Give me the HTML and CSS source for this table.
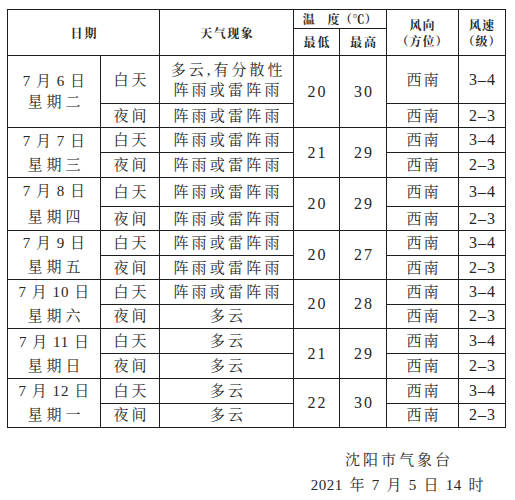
FILE: index.html
```html
<!DOCTYPE html>
<html lang="zh-CN">
<head>
<meta charset="utf-8">
<title>沈阳天气预报</title>
<link rel="stylesheet" href="styles.css">
</head>
<body>
<div class="sheet">
<table class="forecast">
<colgroup>
<col class="c-date"><col class="c-tod"><col class="c-wx"><col class="c-lo"><col class="c-hi"><col class="c-dir"><col class="c-spd">
</colgroup>
<thead>
<tr class="h1">
<th colspan="2" rowspan="2"><span class="hd-date">日期</span></th>
<th rowspan="2"><span class="hd-wx">天气现象</span></th>
<th colspan="2"><span class="hd-temp">温　度（℃）</span></th>
<th rowspan="2" class="hd-two"><div>风向</div><div>（方位）</div></th>
<th rowspan="2" class="hd-two"><div>风速</div><div>（级）</div></th>
</tr>
<tr class="h2">
<th><span class="hd-sub">最低</span></th>
<th><span class="hd-sub">最高</span></th>
</tr>
</thead>
<tbody>
<tr class="r48">
<td rowspan="2" class="date b1"><div class="d1">7 月 6 日</div><div class="d2">星期二</div></td>
<td class="tod">白天</td>
<td class="wx"><div class="wx2">多云,有分散性</div><div>阵雨或雷阵雨</div></td>
<td rowspan="2" class="num">20</td><td rowspan="2" class="num">30</td>
<td class="dir">西南</td><td class="spd">3–4</td>
</tr>
<tr class="r24">
<td class="tod">夜间</td><td class="wx">阵雨或雷阵雨</td><td class="dir">西南</td><td class="spd">2–3</td>
</tr>

<tr class="r25">
<td rowspan="2" class="date"><div class="d1">7 月 7 日</div><div class="d2">星期三</div></td>
<td class="tod">白天</td><td class="wx">阵雨或雷阵雨</td>
<td rowspan="2" class="num">21</td><td rowspan="2" class="num">29</td>
<td class="dir">西南</td><td class="spd">3–4</td>
</tr>
<tr class="r25">
<td class="tod">夜间</td><td class="wx">阵雨或雷阵雨</td><td class="dir">西南</td><td class="spd">2–3</td>
</tr>

<tr class="r29">
<td rowspan="2" class="date b3"><div class="d1">7 月 8 日</div><div class="d2">星期四</div></td>
<td class="tod">白天</td><td class="wx">阵雨或雷阵雨</td>
<td rowspan="2" class="num">20</td><td rowspan="2" class="num">29</td>
<td class="dir">西南</td><td class="spd">3–4</td>
</tr>
<tr class="r24">
<td class="tod">夜间</td><td class="wx">阵雨或雷阵雨</td><td class="dir">西南</td><td class="spd">2–3</td>
</tr>

<tr class="r25">
<td rowspan="2" class="date"><div class="d1">7 月 9 日</div><div class="d2">星期五</div></td>
<td class="tod">白天</td><td class="wx">阵雨或雷阵雨</td>
<td rowspan="2" class="num">20</td><td rowspan="2" class="num">27</td>
<td class="dir">西南</td><td class="spd">3–4</td>
</tr>
<tr class="r24">
<td class="tod">夜间</td><td class="wx">阵雨或雷阵雨</td><td class="dir">西南</td><td class="spd">2–3</td>
</tr>

<tr class="r24">
<td rowspan="2" class="date"><div class="d1">7 月 10 日</div><div class="d2">星期六</div></td>
<td class="tod">白天</td><td class="wx">阵雨或雷阵雨</td>
<td rowspan="2" class="num">20</td><td rowspan="2" class="num">28</td>
<td class="dir">西南</td><td class="spd">3–4</td>
</tr>
<tr class="r24">
<td class="tod">夜间</td><td class="wx">多云</td><td class="dir">西南</td><td class="spd">2–3</td>
</tr>

<tr class="r25">
<td rowspan="2" class="date"><div class="d1">7 月 11 日</div><div class="d2">星期日</div></td>
<td class="tod">白天</td><td class="wx">多云</td>
<td rowspan="2" class="num">21</td><td rowspan="2" class="num">29</td>
<td class="dir">西南</td><td class="spd">3–4</td>
</tr>
<tr class="r25">
<td class="tod">夜间</td><td class="wx">多云</td><td class="dir">西南</td><td class="spd">2–3</td>
</tr>

<tr class="r24">
<td rowspan="2" class="date"><div class="d1">7 月 12 日</div><div class="d2">星期一</div></td>
<td class="tod">白天</td><td class="wx">多云</td>
<td rowspan="2" class="num">22</td><td rowspan="2" class="num">30</td>
<td class="dir">西南</td><td class="spd">3–4</td>
</tr>
<tr class="r24">
<td class="tod">夜间</td><td class="wx">多云</td><td class="dir">西南</td><td class="spd">2–3</td>
</tr>
</tbody>
</table>

<div class="sign">
<div class="sign-org">沈阳市气象台</div>
<div class="sign-time">2021 年 7 月 5 日 14 时</div>
</div>
</div>
</body>
</html>
```

FILE: styles.css
```css
html, body {
  margin: 0;
  padding: 0;
  background: #ffffff;
}

body {
  color: #262626;
  font-family: "Liberation Serif", "Noto Serif CJK SC", "Noto Sans CJK SC", serif;
  font-size: 15px;
}

.sheet {
  padding: 9px 0 0 7px;
}

.forecast {
  border-collapse: collapse;
  table-layout: fixed;
  width: 498px;
}

.c-date { width: 93px; }
.c-tod { width: 59px; }
.c-wx { width: 134px; }
.c-lo { width: 46px; }
.c-hi { width: 47px; }
.c-dir { width: 72px; }
.c-spd { width: 47px; }

.forecast th,
.forecast td {
  border: 1px solid #1e1e1e;
  padding: 0;
  text-align: center;
  vertical-align: middle;
  line-height: 20px;
  white-space: nowrap;
}

.forecast th {
  font-family: "Noto Serif CJK SC", "Noto Sans CJK SC", sans-serif;
  font-size: 12px;
  font-weight: 700;
  line-height: 16px;
}

.h1 { height: 19px; }
.h2 { height: 27px; }
.r48 { height: 48px; }
.r29 { height: 29px; }
.r25 { height: 25px; }
.r24 { height: 24px; }

.hd-date { letter-spacing: 2px; padding-left: 2px; }
.hd-wx { letter-spacing: 1.5px; padding-left: 1.5px; }
.hd-temp { letter-spacing: 0.4px; }
.hd-sub { letter-spacing: 2px; padding-left: 2px; }
.hd-two div { letter-spacing: 1px; }

.date div { line-height: 24px; }
.date.b1 div { line-height: 21px; }
.date.b3 div { line-height: 26px; }
.d1 { letter-spacing: 1px; padding-left: 1px; }
.d2 { letter-spacing: 4px; padding-left: 4px; }

.tod { letter-spacing: 3px; }
.forecast td.tod { padding-left: 3px; }

.wx { letter-spacing: 3.2px; }
.forecast td.wx { padding-left: 3px; }
.wx2 { letter-spacing: 3px; }

.num {
  font-size: 16px;
  letter-spacing: 2px;
}
.forecast td.num { padding-left: 2px; }

.dir { letter-spacing: 2px; }
.forecast td.dir { padding-left: 2px; }

.spd {
  font-size: 16px;
  letter-spacing: 1px;
}
.forecast td.spd { padding-left: 1px; }

.sign {
  margin: 20px 0 0 283px;
  width: 215px;
  text-align: center;
  line-height: 25px;
}

.sign-org { letter-spacing: 3px; padding-left: 3px; }
.sign-time { letter-spacing: 0.5px; word-spacing: 2.5px; }
```
